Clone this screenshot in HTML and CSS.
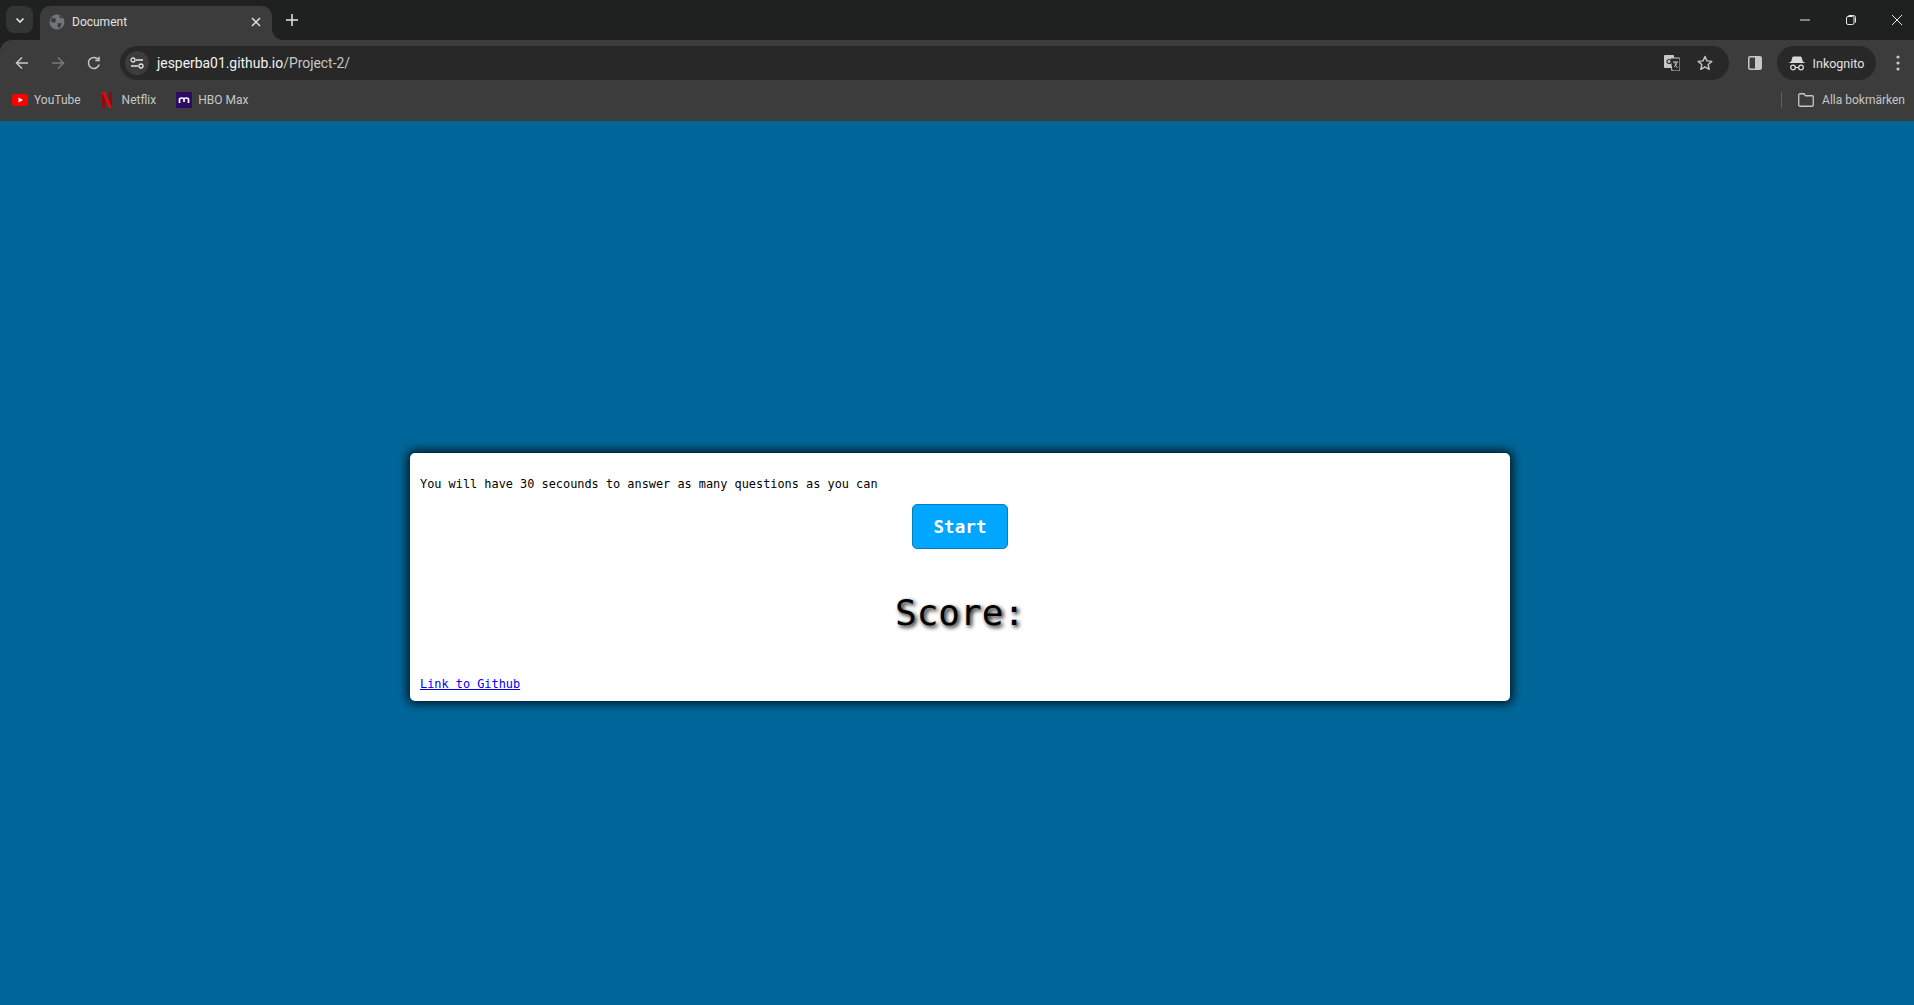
FILE: index.html
```html
<!DOCTYPE html>
<html lang="en">
<head>
    <meta charset="UTF-8">
    <meta name="viewport" content="width=device-width, initial-scale=1.0">
    <title>Document</title>
    <link rel="stylesheet" href="styles.css">
</head>
<body>

    <div class="browser">
        <div class="tabstrip">
            <button class="tab-search">
                <svg width="12" height="12" viewBox="0 0 12 12"><path d="M2.500 4.500 6 8l3.500-3.500" fill="none" stroke="#e3e3e3" stroke-width="1.600"/></svg>
            </button>
            <div class="tab">
                <svg class="tab-globe" width="16" height="16" viewBox="0 0 16 16"><circle cx="8" cy="8" r="7.500" fill="#70757a"/><path d="M3 3.500 7 5 6.500 8 4.500 9 1.500 7ZM9 9l4 .5-2.500 4.500-2-1.500ZM10 1.500l1 2.500 3 .5-2-3Z" fill="#3c3c3c"/></svg>
                <span class="tab-title">Document</span>
                <svg width="12" height="12" viewBox="0 0 12 12"><path d="M2 2l8 8M10 2l-8 8" stroke="#e3e3e3" stroke-width="1.500"/></svg>
            </div>
            <svg class="new-tab" width="14" height="14" viewBox="0 0 14 14"><path d="M7 1v12M1 7h12" stroke="#e3e3e3" stroke-width="1.500"/></svg>
            <div class="window-controls">
                <div class="win-btn"><svg width="12" height="12" viewBox="0 0 12 12"><path d="M1 6h10" stroke="#e8e8e8"/></svg></div>
                <div class="win-btn"><svg width="12" height="12" viewBox="0 0 12 12"><rect x="1.500" y="2.500" width="7.500" height="8" rx="1.500" fill="none" stroke="#e8e8e8"/><path d="M3.500 1.500h5a2 2 0 0 1 2 2v5" fill="none" stroke="#e8e8e8"/></svg></div>
                <div class="win-btn"><svg width="12" height="12" viewBox="0 0 12 12"><path d="M1 1l10 10M11 1 1 11" stroke="#e8e8e8"/></svg></div>
            </div>
        </div>

        <div class="toolbar">
            <div class="nav-icons">
                <svg width="14" height="14" viewBox="0 0 14 14"><path d="M13 7H2M7 1.500 1.500 7 7 12.500" fill="none" stroke="#c7c7c7" stroke-width="1.500"/></svg>
                <svg width="14" height="14" viewBox="0 0 14 14"><path d="M1 7h11M7 1.500 12.500 7 7 12.500" fill="none" stroke="#7a7a7a" stroke-width="1.500"/></svg>
                <svg width="14" height="14" viewBox="0 0 14 14"><path d="M12.200 8.500A5.500 5.500 0 1 1 11 3.200M12 .8v3.700H8.300" fill="none" stroke="#c7c7c7" stroke-width="1.500"/></svg>
            </div>
            <div class="omnibox">
                <div class="site-info">
                    <svg width="14" height="12" viewBox="0 0 14 12"><circle cx="3" cy="3" r="2" fill="none" stroke="#e3e3e3" stroke-width="1.300"/><path d="M6 3h7M1 9h7" stroke="#e3e3e3" stroke-width="1.300"/><circle cx="11" cy="9" r="2" fill="none" stroke="#e3e3e3" stroke-width="1.300"/></svg>
                </div>
                <div class="url">jesperba01.github.io<span class="url-path">/Project-2/</span></div>
                <svg class="translate" width="16" height="16" viewBox="0 0 16 16"><rect x="0" y="0" width="10" height="13" rx="1" fill="#c7c7c7"/><path d="M6 3h9a1 1 0 0 1 1 1v11a1 1 0 0 1-1 1H8Z" fill="#282828" stroke="#c7c7c7"/><circle cx="5" cy="6.500" r="2" fill="none" stroke="#282828" stroke-width="1.200"/><path d="M9 7h5M11 7c0 3 1 4 2.500 6M13 7c-.3 2-1.500 4-3 5" fill="none" stroke="#c7c7c7"/></svg>
                <svg class="star" width="16" height="16" viewBox="0 0 16 16"><path d="M8 1.500l2 4.400 4.800.5-3.600 3.200 1 4.700L8 11.900l-4.200 2.400 1-4.700L1.200 6.400 6 5.900Z" fill="none" stroke="#c7c7c7" stroke-width="1.400" stroke-linejoin="round"/></svg>
            </div>
            <svg class="side-panel" width="14" height="14" viewBox="0 0 14 14"><rect x=".75" y=".75" width="12.500" height="12.500" rx="1.500" fill="none" stroke="#c7c7c7" stroke-width="1.500"/><rect x="7" y="1" width="6" height="12" fill="#c7c7c7"/></svg>
            <div class="incognito">
                <svg width="16" height="16" viewBox="0 0 16 16"><path d="M4 2h8l1.500 5h-11ZM.5 7.500h15" fill="#d8d8d8" stroke="#d8d8d8" stroke-width="1"/><circle cx="4" cy="12.500" r="2.300" fill="none" stroke="#d8d8d8" stroke-width="1.300"/><circle cx="12" cy="12.500" r="2.300" fill="none" stroke="#d8d8d8" stroke-width="1.300"/><path d="M6.300 12.500h3.400" stroke="#d8d8d8" stroke-width="1.300"/></svg>
                <span>Inkognito</span>
            </div>
            <svg class="menu-dots" width="4" height="16" viewBox="0 0 4 16"><circle cx="2" cy="2" r="1.600" fill="#c7c7c7"/><circle cx="2" cy="8" r="1.600" fill="#c7c7c7"/><circle cx="2" cy="14" r="1.600" fill="#c7c7c7"/></svg>
        </div>

        <div class="bookmarks">
            <div class="bookmark bm-youtube">
                <svg width="16" height="12" viewBox="0 0 16 12"><rect width="16" height="12" rx="3" fill="#f00"/><path d="M6.500 3.500 11 6l-4.500 2.500Z" fill="#fff"/></svg>
                <span>YouTube</span>
            </div>
            <div class="bookmark bm-netflix">
                <svg width="10" height="16" viewBox="0 0 10 16"><path d="M0 0h3v16l-3 0Z" fill="#8f0a0e"/><path d="M7 0h3v16H7Z" fill="#8f0a0e"/><path d="M0 0h3l7 16H7Z" fill="#e50914"/></svg>
                <span>Netflix</span>
            </div>
            <div class="bookmark bm-hbo">
                <svg width="16" height="16" viewBox="0 0 16 16"><rect width="16" height="16" fill="#2e0a63"/><path d="M3.500 11V6.500M3.500 7.500c0-2 4.500-2 4.500 0V10M8 7.500c0-2 4.500-2 4.500 0V11" fill="none" stroke="#fff" stroke-width="1.700"/></svg>
                <span>HBO Max</span>
            </div>
            <div class="bookmarks-end">
                <div class="separator"></div>
                <svg width="16" height="14" viewBox="0 0 16 14"><path d="M.75 12V2A1.250 1.250 0 0 1 2 .75h4l1.500 2H14A1.250 1.250 0 0 1 15.250 4v8A1.250 1.250 0 0 1 14 13.250H2A1.250 1.250 0 0 1 .75 12Z" fill="none" stroke="#c7c7c7" stroke-width="1.300"/></svg>
                <span>Alla bokmärken</span>
            </div>
        </div>
    </div>

    <main class="page">
        <div class="card">
            <p class="intro">You will have 30 secounds to answer as many questions as you can</p>
            <button class="start-btn">Start</button>
            <h1 class="score">Score:</h1>
            <a class="github-link" href="#">Link to Github</a>
        </div>
    </main>

</body>
</html>
```

FILE: styles.css
```css
* {
    box-sizing: border-box;
}
html, body {
    height: 100%;
}
body {
    margin: 0;
    display: flex;
    flex-direction: column;
    overflow: hidden;
    background: #006699;
    font-family: Roboto, Arial, sans-serif;
}

/* browser chrome */
.browser {
    flex: none;
    background: #1f2120;
    color: #e3e3e3;
}
.tabstrip {
    height: 40px;
    display: flex;
    align-items: flex-end;
}
.tab-search {
    width: 27px;
    height: 27px;
    margin: 0 7px 7px 6px;
    padding: 0;
    display: flex;
    align-items: center;
    justify-content: center;
    border: none;
    border-radius: 8px;
    background: #333534;
}
.tab {
    position: relative;
    width: 232px;
    height: 34px;
    padding: 0 10px 2px 9px;
    display: flex;
    align-items: center;
    background: #3c3c3c;
    border-radius: 10px 10px 0 0;
}
.tab::after {
    content: "";
    position: absolute;
    right: -12px;
    bottom: 0;
    width: 12px;
    height: 12px;
    background: radial-gradient(circle at 100% 0, transparent 12px, #3c3c3c 12.500px);
}
.tab-globe {
    margin-right: 7px;
}
.tab-title {
    flex: 1;
    font-size: 12px;
    line-height: 15px;
    color: #e3e3e3;
}
.new-tab {
    margin: 0 0 13px 13px;
}
.window-controls {
    margin-left: auto;
    margin-right: -6px;
    align-self: flex-start;
    display: flex;
}
.win-btn {
    width: 46px;
    height: 40px;
    display: flex;
    align-items: center;
    justify-content: center;
}

.toolbar {
    height: 40px;
    display: flex;
    align-items: center;
    background: #3c3c3c;
    border-radius: 12px 0 0 0;
}
.nav-icons {
    width: 120px;
    padding: 0 19px 0 15px;
    display: flex;
    justify-content: space-between;
}
.omnibox {
    width: 1609px;
    height: 34px;
    margin-top: 6px;
    padding: 0 16px 0 5px;
    display: flex;
    align-items: center;
    background: #282828;
    border-radius: 17px;
}
.nav-icons, .side-panel, .incognito, .menu-dots {
    margin-top: 6px;
}
.site-info {
    width: 24px;
    height: 24px;
    margin-right: 8px;
    display: flex;
    align-items: center;
    justify-content: center;
    background: #3c3c3c;
    border-radius: 50%;
}
.url {
    flex: 1;
    font-size: 13.900px;
    color: #f2f2f2;
}
.url-path {
    color: #c7c7c7;
}
.translate {
    margin-right: 17px;
}
.side-panel {
    margin-left: 19px;
}
.incognito {
    width: 99px;
    height: 34px;
    margin-left: 15px;
    display: flex;
    align-items: center;
    justify-content: center;
    gap: 8px;
    background: #282828;
    border-radius: 17px;
    font-size: 12.500px;
    color: #e3e3e3;
}
.menu-dots {
    margin-left: 20px;
}

.bookmarks {
    height: 41px;
    padding: 0 9px 2px 12px;
    display: flex;
    align-items: center;
    background: #3c3c3c;
    font-size: 12px;
    color: #c7c7c7;
}
.bookmark {
    display: flex;
    align-items: center;
}
.bm-youtube svg {
    margin-right: 6px;
}
.bm-netflix {
    margin-left: 21px;
}
.bm-netflix svg {
    margin-right: 10px;
}
.bm-hbo {
    margin-left: 20px;
}
.bm-hbo svg {
    margin-right: 6px;
}
.bookmarks-end {
    margin-left: auto;
    display: flex;
    align-items: center;
}
.bookmarks-end svg {
    margin-right: 8px;
}
.separator {
    width: 1px;
    height: 16px;
    margin-right: 16px;
    background: #5f5f5f;
}

/* the page itself */
.page {
    flex: 1;
    padding: 28px 0 0 6px;
    display: flex;
    align-items: center;
    justify-content: center;
    font-family: "DejaVu Sans Mono", Consolas, monospace;
}
.card {
    width: 1100px;
    height: 248px;
    padding: 24px 10px 0;
    display: flex;
    flex-direction: column;
    align-items: flex-start;
    background: #fff;
    border-radius: 5px;
    box-shadow: 0 0 10px 3px rgba(0, 0, 0, 0.75);
}
.intro {
    margin: 0;
    font-size: 11.880px;
    line-height: 14px;
    color: #000;
}
.start-btn {
    align-self: center;
    width: 96px;
    height: 45px;
    margin-top: 13px;
    padding: 0;
    background: #00a6ff;
    border: 1px solid #0080c0;
    border-radius: 5px;
    font-family: inherit;
    font-size: 17.600px;
    font-weight: bold;
    color: #fff;
}
.score {
    align-self: center;
    margin: 42px 0 0;
    font-size: 36px;
    line-height: 44px;
    font-weight: normal;
    color: #000;
    text-shadow: 2px 2px 4px #000;
}
.github-link {
    margin-top: 42px;
    font-size: 11.880px;
    line-height: 14px;
    color: #0000ee;
}
```
